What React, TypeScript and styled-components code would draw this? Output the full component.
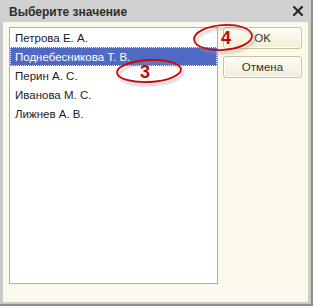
import React from "react";
import styled, { createGlobalStyle } from "styled-components";

const GlobalStyle = createGlobalStyle`
  body {
    margin: 0;
    background: #ffffff;
    font-family: "Liberation Sans", Arial, sans-serif;
  }
`;

const Window = styled.div`
  position: relative;
  box-sizing: border-box;
  width: 313px;
  height: 306px;
  display: flex;
  flex-direction: column;
  padding: 0 2px 2px 3px;
  background: #cacaca;
  border-right: 2px solid #8e8e8e;
  border-bottom: 2px solid #8e8e8e;
`;

const TitleBar = styled.div`
  height: 22px;
  display: flex;
  align-items: center;
  justify-content: space-between;
  padding: 0 6px 0 6px;
  margin-left: -3px;
  margin-right: -2px;
  background: #d0d0d0;
`;

const Title = styled.span`
  font-size: 12px;
  font-weight: bold;
  color: #2e2e2e;
  margin-left: 3px;
  margin-top: 1px;
`;

const Close = styled.svg`
  width: 10px;
  height: 10px;
  margin-right: 2px;
`;

const Body = styled.div`
  flex: 1;
  display: flex;
  gap: 5px;
  padding: 5px 6px 18px 6px;
  background: #fbf9eb;
  border-right: 1px solid #d9d3b6;
`;

const List = styled.div`
  box-sizing: border-box;
  width: 210px;
  border: 1px solid #b9ae84;
  background: #ffffff;
  display: flex;
  flex-direction: column;
`;

const Row = styled.div<{ selected?: boolean }>`
  box-sizing: border-box;
  height: 19px;
  display: flex;
  align-items: center;
  padding-left: 4px;
  font-size: 11.5px;
  color: ${props => (props.selected ? "#ffffff" : "#1c1c1c")};
  background: ${props => (props.selected ? "#5069c2" : "transparent")};
  border: 1px ${props => (props.selected ? "dotted #e6ebff" : "solid transparent")};
`;

const Buttons = styled.div`
  display: flex;
  flex-direction: column;
  gap: 7px;
`;

const Button = styled.div`
  box-sizing: border-box;
  width: 79px;
  height: 22px;
  display: flex;
  align-items: center;
  justify-content: center;
  font-size: 11.5px;
  color: #333333;
  border: 1px solid #cbc29f;
  border-radius: 3px;
  background: linear-gradient(#fefdf6, #f1edd6);
  box-shadow: inset 0 0 0 1px #fffef8;
`;

const MarkerSvg = styled.svg`
  position: absolute;
  overflow: visible;
  pointer-events: none;
`;

interface MarkerProps {
  left: number;
  top: number;
  rx: number;
  ry: number;
  label: string;
  dx: number;
  tilt: number;
}

function Marker({ left, top, rx, ry, label, dx, tilt }: MarkerProps) {
  const w = rx * 2 + 8;
  const h = ry * 2 + 8;
  return (
    <MarkerSvg
      width={w}
      height={h}
      style={{ left: left - 4, top: top - 4 }}
    >
      <defs>
        <filter id={`sh${label}`} x="-20%" y="-30%" width="140%" height="170%">
          <feGaussianBlur stdDeviation="1.2" />
        </filter>
      </defs>
      <ellipse
        cx={w / 2 + 2}
        cy={h / 2 + 3}
        rx={rx}
        ry={ry}
        fill="none"
        stroke="#9a9a9a"
        strokeWidth="2"
        opacity="0.55"
        filter={`url(#sh${label})`}
        transform={`rotate(${tilt} ${w / 2} ${h / 2})`}
      />
      <ellipse
        cx={w / 2}
        cy={h / 2}
        rx={rx}
        ry={ry}
        fill="none"
        stroke="#c4090b"
        strokeWidth="1.8"
        transform={`rotate(${tilt} ${w / 2} ${h / 2})`}
      />
      <text
        x={w / 2 + dx}
        y={h / 2 + 6.5}
        textAnchor="middle"
        fontFamily="Liberation Sans, Arial, sans-serif"
        fontWeight="bold"
        fontSize="18"
        fill="#c4090b"
      >
        {label}
      </text>
    </MarkerSvg>
  );
}

const people = [
  "Петрова Е. А.",
  "Поднебесникова Т. В.",
  "Перин А. С.",
  "Иванова М. С.",
  "Лижнев А. В."
];

export default function App() {
  return (
    <>
      <GlobalStyle />
      <Window>
        <TitleBar>
          <Title>Выберите значение</Title>
          <Close viewBox="0 0 10 10">
            <path
              d="M1 1 L9 9 M9 1 L1 9"
              stroke="#2a2a2a"
              strokeWidth="2.2"
              strokeLinecap="square"
            />
          </Close>
        </TitleBar>
        <Body>
          <List>
            {people.map((name, i) => (
              <Row key={name} selected={i === 1}>
                {name}
              </Row>
            ))}
          </List>
          <Buttons>
            <Button>OK</Button>
            <Button>Отмена</Button>
          </Buttons>
        </Body>
        <Marker left={194} top={25} rx={29} ry={12.5} label="4" dx={3} tilt={-4} />
        <Marker left={117} top={60} rx={32} ry={11} label="3" dx={-4} tilt={-3} />
      </Window>
    </>
  );
}
